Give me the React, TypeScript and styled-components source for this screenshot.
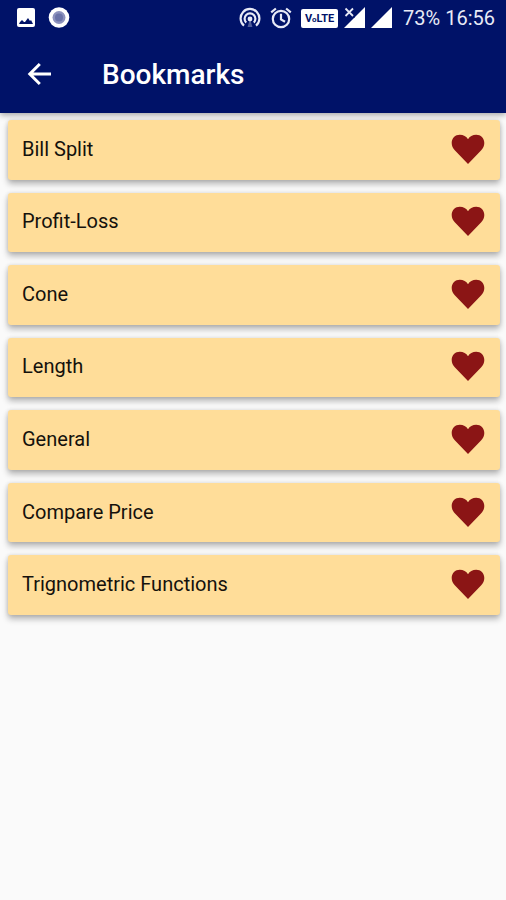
import React from "react";
import styled, { createGlobalStyle } from "styled-components";

const GlobalStyle = createGlobalStyle`
  * { box-sizing: border-box; }
  body {
    margin: 0;
    background: #fafafa;
    font-family: Roboto, "Liberation Sans", sans-serif;
  }
`;

const Screen = styled.div`
  min-height: 100vh;
  background: #fafafa;
`;

const Header = styled.header`
  background: #001268;
  color: #ffffff;
  box-shadow: 0 2px 6px rgba(0, 0, 0, 0.35);
`;

const StatusBar = styled.div`
  display: flex;
  justify-content: space-between;
  height: 36px;
  padding: 0 11px 0 16px;
`;

const StatusGroup = styled.div<{ $gap: number }>`
  display: flex;
  align-items: center;
  gap: ${(p) => p.$gap}px;
`;

const StatusText = styled.span`
  margin-left: 5px;
  font-size: 20px;
  line-height: 36px;
  color: #e8eaf6;
  white-space: nowrap;
`;

const Toolbar = styled.div`
  display: flex;
  align-items: center;
  gap: 48px;
  height: 77px;
  padding: 0 26px;
`;

const IconButton = styled.button`
  display: flex;
  padding: 0;
  border: 0;
  background: none;
  color: inherit;
  cursor: pointer;
`;

const Title = styled.h1`
  margin: 0;
  font-size: 28px;
  font-weight: 500;
  line-height: 36px;
`;

const List = styled.ul`
  display: grid;
  grid-auto-rows: 1fr;
  gap: 13px;
  min-height: 495px;
  margin: 0;
  padding: 0;
  list-style: none;
`;

const Main = styled.main`
  padding: 7px 6px 16px 8px;
`;

const Card = styled.li`
  display: flex;
  align-items: center;
  justify-content: space-between;
  padding: 0 14px 2px;
  border-radius: 3px;
  background: #ffdd99;
  box-shadow: 0 4px 6px rgba(0, 0, 0, 0.28), 0 0 4px rgba(0, 0, 0, 0.12);
`;

const Label = styled.span`
  font-size: 20px;
  line-height: 24px;
  color: #14110c;
`;

const ImageIcon = () => (
  <svg width="20" height="20" viewBox="0 0 20 20" aria-hidden="true">
    <rect x="1" y="0" width="18" height="19" rx="2" fill="#fff" />
    <path d="M3 16l1-2 2-2 2 2 1 0 3-4 2 3 1-1 2 4z" fill="#001268" />
  </svg>
);

const RecordIcon = () => (
  <svg width="22" height="22" viewBox="0 0 22 22" aria-hidden="true">
    <circle cx="11" cy="10.5" r="10.3" fill="#fff" />
    <circle cx="11" cy="10.5" r="6.5" fill="#8c91bd" />
    <circle cx="11" cy="10.5" r="4" fill="#6a72a8" />
  </svg>
);

const HotspotIcon = () => (
  <svg width="22" height="22" viewBox="0 0 22 22" fill="none" stroke="#e8eaf6" strokeWidth="2.2" aria-hidden="true">
    <path d="M5 18.6a9.4 9.4 0 1 1 12 0" />
    <path d="M7.2 15.6a5.4 5.4 0 1 1 7.6 0" />
    <path d="M11 11.5L8.6 20h4.8z" fill="#e8eaf6" stroke="none" opacity="0.35" />
    <circle cx="11" cy="12" r="2.4" fill="#e8eaf6" stroke="none" />
  </svg>
);

const AlarmIcon = () => (
  <svg width="22" height="22" viewBox="0 0 22 22" fill="none" stroke="#e8eaf6" strokeWidth="2.2" aria-hidden="true">
    <circle cx="11" cy="12" r="8.2" />
    <path d="M1.2 5.4l4.7-3.9M20.8 5.4l-4.7-3.9M11 6.8v5.6l4 2.4" />
  </svg>
);

const VolteBadge = styled.span`
  width: 37px;
  height: 19px;
  border-radius: 2px;
  background: #ffffff;
  color: #001268;
  font-size: 11px;
  font-weight: 700;
  line-height: 19px;
  text-align: center;
  white-space: nowrap;
`;

const VolteSmall = styled.span`
  font-size: 8px;
`;

const SignalIcon = ({ crossed = false }: { crossed?: boolean }) => (
  <svg width="21" height="22" viewBox="0 0 21 22" aria-hidden="true">
    <path d="M21 0v21H0z" fill="#fff" />
    {crossed && (
      <>
        <path d="M0 0h11v10.5H0z" fill="#001268" />
        <path d="M1.5 1.5l7.5 7.5M9 1.5L1.5 9" stroke="#e8eaf6" strokeWidth="1.8" />
      </>
    )}
  </svg>
);

const BackIcon = () => (
  <svg width="28" height="28" viewBox="0 0 28 28" fill="none" stroke="#fff" strokeWidth="3" aria-hidden="true">
    <path d="M25 13H4.5M13.8 3L3.8 13l10 10" />
  </svg>
);

const HeartIcon = () => (
  <svg width="36" height="32" viewBox="0 0 36 32" aria-hidden="true">
    <path
      d="M18 31L5 17.5C2.8 15.2 1.7 12.8 1.7 10C1.7 5.2 5.2 1.8 9.8 1.8C13.4 1.8 16.4 3.6 18 6.2C19.6 3.6 22.6 1.8 26.2 1.8C30.8 1.8 34.3 5.2 34.3 10C34.3 12.8 33.2 15.2 31 17.5Z"
      fill="#8b1515"
    />
  </svg>
);

const bookmarks = [
  "Bill Split",
  "Profit-Loss",
  "Cone",
  "Length",
  "General",
  "Compare Price",
  "Trignometric Functions",
];

export default function App() {
  return (
    <Screen>
      <GlobalStyle />
      <Header>
        <StatusBar>
          <StatusGroup $gap={12}>
            <ImageIcon />
            <RecordIcon />
          </StatusGroup>
          <StatusGroup $gap={6}>
            <StatusGroup $gap={9}>
              <HotspotIcon />
              <AlarmIcon />
              <VolteBadge>
                V<VolteSmall>o</VolteSmall>LTE
              </VolteBadge>
            </StatusGroup>
            <SignalIcon crossed />
            <SignalIcon />
            <StatusText>73% 16:56</StatusText>
          </StatusGroup>
        </StatusBar>
        <Toolbar>
          <IconButton type="button" aria-label="Back">
            <BackIcon />
          </IconButton>
          <Title>Bookmarks</Title>
        </Toolbar>
      </Header>
      <Main>
        <List>
          {bookmarks.map((name) => (
            <Card key={name}>
              <Label>{name}</Label>
              <IconButton type="button" aria-label={`Remove ${name} from bookmarks`}>
                <HeartIcon />
              </IconButton>
            </Card>
          ))}
        </List>
      </Main>
    </Screen>
  );
}
